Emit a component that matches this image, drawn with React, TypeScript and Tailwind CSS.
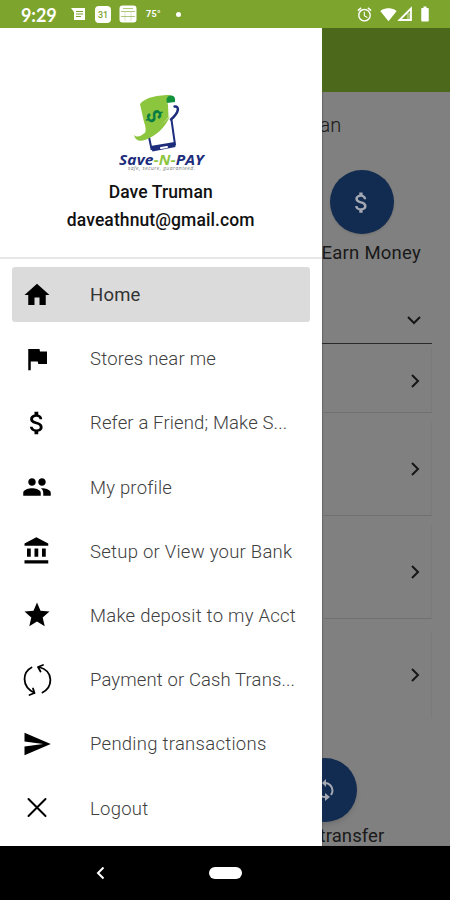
import type { ReactNode } from 'react'
import {
  MdHome, MdFlag, MdAttachMoney, MdPeople, MdStar, MdSend, MdSignalWifi4Bar, MdAlarm, MdBatteryFull,
} from 'react-icons/md'

const SyncIcon = () => (
  <svg viewBox="0 0 30 32" className="h-8 w-[30px]" fill="none" stroke="currentColor" strokeWidth="1.8" strokeLinecap="round" strokeLinejoin="round">
    <path d="M9.500 3.500C1 8 -1.500 22 12.500 29M7.500 31l5-2-1.500-4.500" />
    <path d="M20.500 28.500C31 23 32 7 17 3M21 1l-5 2 2.500 4.500" />
  </svg>
)

const BankIcon = () => (
  <svg viewBox="0 0 24 24" className="size-8" fill="currentColor">
    <path d="M4 10v6.500h3V10zM10 10v6.500h3V10zM16 10v6.500h3V10zM2 22h19v-2.600H2zM11.500 1L2 6v1.800h19V6z" />
  </svg>
)

const CloseIcon = () => (
  <svg viewBox="0 0 30 30" className="size-[30px]" fill="none" stroke="currentColor" strokeWidth="2" strokeLinecap="round">
    <path d="M6.500 6l17 17M23.500 6l-17 17" />
  </svg>
)

const menu: { label: string; icon: ReactNode; spacing: string; active?: boolean }[] = [
  { label: 'Home', icon: <MdHome size={30} />, spacing: 'tracking-[0.2px]', active: true },
  { label: 'Stores near me', icon: <MdFlag size={30} />, spacing: 'tracking-[0.22px]' },
  { label: 'Refer a Friend; Make S...', icon: <MdAttachMoney size={30} />, spacing: 'tracking-[0.14px]' },
  { label: 'My profile', icon: <MdPeople size={30} />, spacing: 'tracking-[0.2px]' },
  { label: 'Setup or View your Bank', icon: <BankIcon />, spacing: 'tracking-[0.25px]' },
  { label: 'Make deposit to my Acct', icon: <MdStar size={30} />, spacing: 'tracking-[0.25px]' },
  { label: 'Payment or Cash Trans...', icon: <SyncIcon />, spacing: 'tracking-[0.12px]' },
  { label: 'Pending transactions', icon: <MdSend size={30} />, spacing: 'tracking-[0.27px]' },
  { label: 'Logout', icon: <CloseIcon />, spacing: 'tracking-[0.25px]' },
]

function Logo() {
  return (
    <svg viewBox="0 0 90 86" className="h-[86px] w-[90px]">
      <path d="M33 45L35.500 57L59 52.500L55.500 28" fill="none" stroke="#1d2d7c" strokeWidth="2" />
      <path d="M58.500 14.500C63.500 14 63.500 20 55 27.500" fill="none" stroke="#1d2d7c" strokeWidth="2.500" strokeLinecap="round" />
      <path d="M34.500 54L58.500 50L59.500 55L36.500 59.500Z" fill="#1d2d7c" />
      <path d="M45 56l6-1" stroke="#fff" strokeWidth="2" strokeLinecap="round" />
      <path d="M24 12C30 5 41 3 56 3C50 4 51 9 52 13L52.500 25C46 34 37 41 28.500 43Q31 37 28 30Z" fill="#8cc63f" />
      <path d="M28.500 41Q44 37 54 24Q47 41 29 48Q20 51 18 43Q22 47 28.500 41Z" fill="#8cc63f" />
      <path d="M54 3.500Q60 2.500 59 10L51 11Q49 5 54 3.500Z" fill="#12913d" />
      <text x="38" y="31" textAnchor="middle" transform="rotate(62 38 24)" fill="#087c43" className="font-['Roboto'] text-[20px] font-bold">$</text>
      <text x="3" y="73" textLength="85" lengthAdjust="spacingAndGlyphs" className="font-['Open_Sans'] text-[14px] font-bold italic" fill="#1d2d7c">
        Save<tspan fill="#8cc63f">-N-</tspan>PAY
      </text>
      <text x="12" y="78" textLength="67" className="font-['Open_Sans'] text-[5px] italic" fill="#777">safe, secure, guaranteed.</text>
    </svg>
  )
}

function StatusBar() {
  return (
    <header className="flex h-7 shrink-0 items-center bg-[#7da52e] text-white">
      <span className="ml-[21px] w-[37px] pt-px font-['Lato','Roboto',sans-serif] text-[18px] font-bold leading-none tracking-[-0.1px]">9:29</span>
      <svg viewBox="0 0 16 16" className="ml-3 size-4">
        <path d="M1 2h14v12H4V6z" fill="currentColor" />
        <path d="M6 5.500h7M6 8h7M6 10.500h5" stroke="#7da52e" />
      </svg>
      <div className="ml-[9px] flex h-[17px] w-4 items-end justify-center rounded-sm bg-white pb-[3px] text-[9px] font-medium leading-none text-[#7da52e]">31</div>
      <svg viewBox="0 0 18 18" className="ml-2 size-[18px]">
        <rect x="0.500" y="0.500" width="17" height="17" rx="3" fill="currentColor" />
        <path d="M2 6.500h14M2 11.500h14M4 3.500h10" stroke="#7da52e" opacity=".6" />
        <path d="M6 7v9M12 7v9" stroke="#7da52e" opacity=".25" />
      </svg>
      <span className="ml-[9px] w-4 text-[9px] font-bold leading-none tracking-[0.3px]">75°</span>
      <span className="ml-[14px] size-[5px] rounded-full bg-white" />
      <MdAlarm className="ml-auto" size={17} />
      <MdSignalWifi4Bar className="ml-[7px]" size={17} />
      <svg viewBox="0 0 16 16" className="size-4">
        <path d="M2.500 14L14 2.500V14z" fill="none" stroke="currentColor" strokeWidth="1.800" />
        <path d="M10 7h4v7h-4z" fill="currentColor" opacity=".35" />
      </svg>
      <MdBatteryFull className="mr-[16px] ml-[3px]" size={18} />
    </header>
  )
}

function Drawer() {
  return (
    <aside className="flex w-[321.5px] shrink-0 flex-col bg-white">
      <div className="flex h-[231px] flex-col items-center border-b-2 border-[#e7e7e7] pt-16 text-[17.5px] font-medium leading-[28px] tracking-[0.1px] text-[#111]">
        <Logo />
        <p>Dave Truman</p>
        <p>daveathnut@gmail.com</p>
      </div>
      <nav className="flex flex-col gap-[9.2px] px-3 pt-[8px]">
        {menu.map((item) => (
          <a
            key={item.label}
            className={`flex h-[55px] items-center rounded-[3px] pl-[10px] ${item.active ? 'bg-[#dbdbdb] text-[#333]' : 'text-[#404040]'}`}
          >
            <span className="flex w-[30px] shrink-0 justify-center text-black">{item.icon}</span>
            <span className={`ml-[38px] whitespace-nowrap pt-px text-[18.5px] leading-6 ${item.active ? 'font-normal' : 'font-light'} ${item.spacing}`}>{item.label}</span>
          </a>
        ))}
      </nav>
    </aside>
  )
}

function Chevron({ down = false }: { down?: boolean }) {
  return (
    <svg viewBox="0 0 16 16" className="size-4 shrink-0" fill="none" stroke="#161616" strokeWidth="2">
      <path d={down ? 'M2 5l6 6 6-6' : 'M5 2l6 6-6 6'} />
    </svg>
  )
}

// Part of the home page left visible beside the open drawer
function PageBehind() {
  return (
    <main className="flex min-w-0 flex-1 flex-col overflow-hidden bg-[#808080] text-[#191919] shadow-[inset_1px_0_1px_rgba(0,0,0,0.2)]">
      <div className="h-16 shrink-0 bg-[#4b681b]" />
      <p className="-ml-[2px] mt-[19px] h-7 text-[20px] font-light leading-7">an</p>
      <div className="mt-[31px] ml-2 flex size-16 shrink-0 items-center justify-center rounded-full bg-[#122b50] text-[#a4a9b3] shadow-sm">
        <MdAttachMoney size={27} />
      </div>
      <p className="mt-[7px] h-6 whitespace-nowrap text-[18.5px] leading-6 tracking-[0.25px]">Earn Money</p>
      <div className="mr-[18px] mt-[31px] flex h-[48px] shrink-0 items-center justify-end border-b border-[#292929] pr-[10px]">
        <Chevron down />
      </div>
      <div className="mr-[18px] mt-1 flex h-[65px] shrink-0 items-center justify-end border-r border-b border-r-[#7a7a7a] border-b-[#707070] pt-[2px] pr-2"><Chevron /></div>
      <div className="mr-[18px] mt-[9px] flex h-[94px] shrink-0 items-center justify-end border-r border-b border-r-[#7a7a7a] border-b-[#707070] pr-2"><Chevron /></div>
      <div className="mr-[18px] mt-[9px] flex h-[94px] shrink-0 items-center justify-end border-r border-b border-r-[#7a7a7a] border-b-[#707070] pr-2"><Chevron /></div>
      <div className="mr-[18px] mt-[13px] flex h-[86px] shrink-0 items-center justify-end border-r border-r-[#7a7a7a] pr-2"><Chevron /></div>
      <div className="mt-[40px] -ml-[29px] flex size-16 shrink-0 items-center justify-center rounded-full bg-[#122b50] text-[#a4a9b3] shadow-md">
        <svg viewBox="0 0 24 24" className="size-6" fill="none" stroke="currentColor" strokeWidth="2">
          <path d="M12 5a7.500 7.500 0 0 1 7.500 7.500c0 2-.5 3-1.500 4.500M12 19a7 7 0 0 1-5.500-11.500" />
          <path d="M13 1v8L9 5zM12 15v8l5-4z" fill="currentColor" stroke="none" />
        </svg>
      </div>
      <p className="-ml-[2px] mt-[2px] h-6 whitespace-nowrap text-[18.5px] leading-6 tracking-[0.1px]">transfer</p>
    </main>
  )
}

export default function App() {
  return (
    <div className="flex h-[900px] w-[450px] flex-col overflow-hidden font-['Roboto',sans-serif]">
      <StatusBar />
      <div className="flex h-[818px] shrink-0">
        <Drawer />
        <PageBehind />
      </div>
      <footer className="flex h-[54px] shrink-0 items-center bg-black text-white">
        <svg viewBox="0 0 10 14" className="ml-[95px] h-3.5 w-2.5" fill="none" stroke="currentColor" strokeWidth="2">
          <path d="M8.500 1.500L3 7l5.500 5.500" />
        </svg>
        <span className="ml-[104px] h-3 w-[33px] rounded-full bg-white" />
      </footer>
    </div>
  )
}
